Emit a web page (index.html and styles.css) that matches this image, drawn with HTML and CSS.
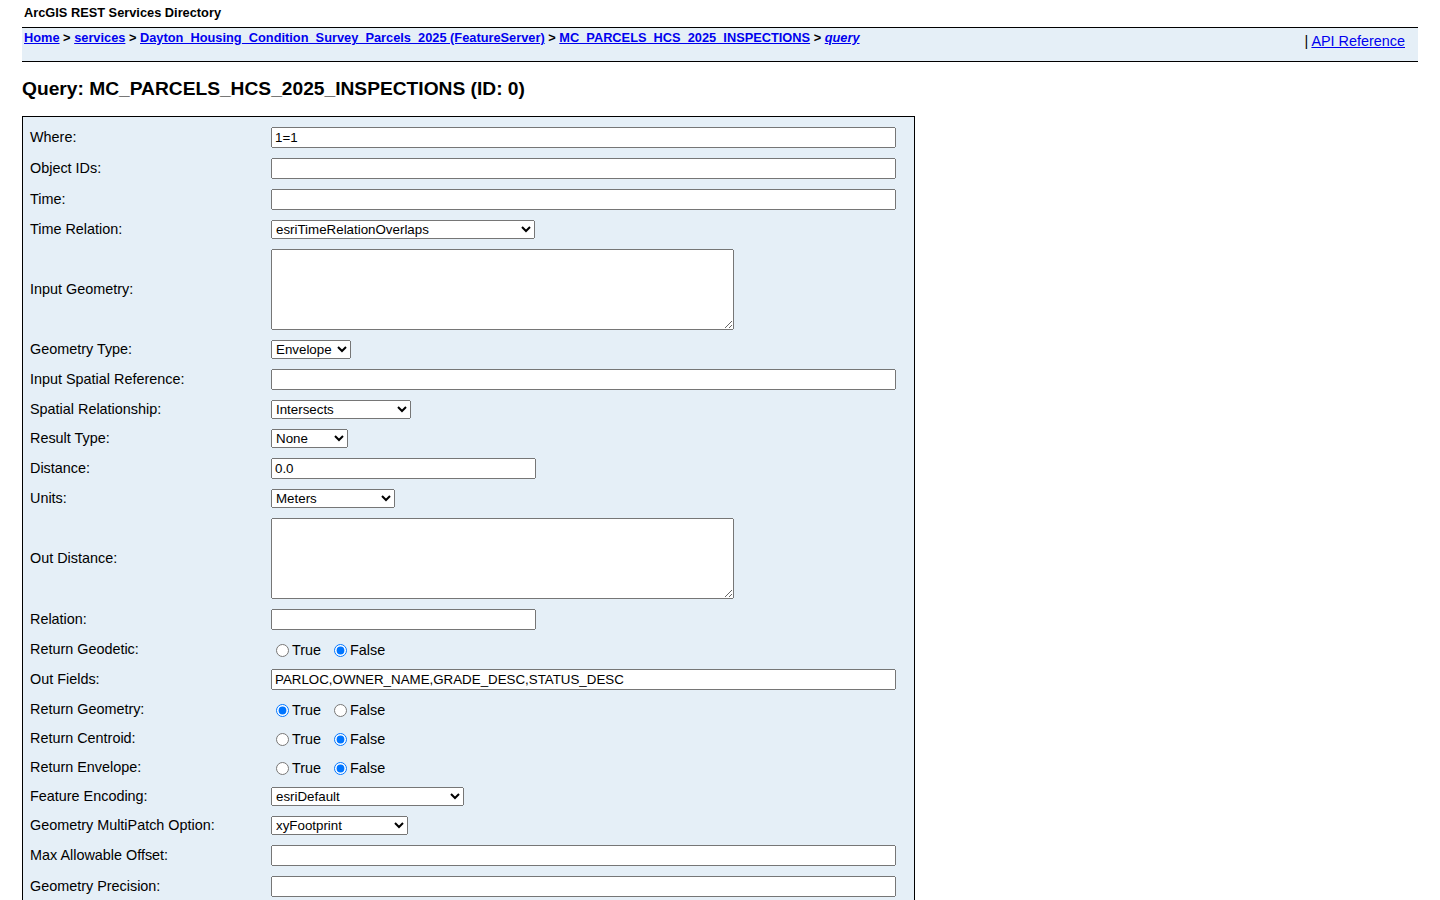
FILE: index.html
```html
<!DOCTYPE html>
<html lang="en">
<head>
<meta charset="utf-8">
<title>Query: MC_PARCELS_HCS_2025_INSPECTIONS (ID: 0)</title>
<link rel="stylesheet" href="styles.css">
</head>
<body>
<div class="title">ArcGIS REST Services Directory</div>
<div class="nav">
  <div class="crumbs">
    <a href="#">Home</a> &gt; <a href="#">services</a> &gt; <a href="#">Dayton_Housing_Condition_Survey_Parcels_2025 (FeatureServer)</a> &gt; <a href="#">MC_PARCELS_HCS_2025_INSPECTIONS</a> &gt; <a href="#" class="cur">query</a>
  </div>
  <div class="apiref">| <a href="#">API Reference</a></div>
</div>
<h2 class="heading">Query: MC_PARCELS_HCS_2025_INSPECTIONS (ID: 0)</h2>
<form class="qform">
  <label class="lbl">Where:</label>
  <div class="fld"><input type="text" class="w-full" value="1=1"></div>

  <label class="lbl">Object IDs:</label>
  <div class="fld"><input type="text" class="w-full"></div>

  <label class="lbl">Time:</label>
  <div class="fld"><input type="text" class="w-full"></div>

  <label class="lbl">Time Relation:</label>
  <div class="fld"><select class="s-timerel"><option>esriTimeRelationOverlaps</option><option>esriTimeRelationAfterStartOverlapsEnd</option><option>esriTimeRelationOverlapsStartWithinEnd</option></select></div>

  <label class="lbl">Input Geometry:</label>
  <div class="fld"><textarea class="ta"></textarea></div>

  <label class="lbl">Geometry Type:</label>
  <div class="fld"><select class="s-geomtype"><option>Envelope</option><option>Point</option><option>Multipoint</option><option>Polyline</option><option>Polygon</option></select></div>

  <label class="lbl">Input Spatial Reference:</label>
  <div class="fld"><input type="text" class="w-full"></div>

  <label class="lbl">Spatial Relationship:</label>
  <div class="fld"><select class="s-spatial"><option>Intersects</option><option>Contains</option><option>Crosses</option><option>Envelope Intersects</option><option>Index Intersects</option><option>Overlaps</option><option>Touches</option><option>Within</option><option>Relation</option></select></div>

  <label class="lbl">Result Type:</label>
  <div class="fld"><select class="s-result"><option>None</option><option>Standard</option><option>Tile</option></select></div>

  <label class="lbl">Distance:</label>
  <div class="fld"><input type="text" class="w-half" value="0.0"></div>

  <label class="lbl">Units:</label>
  <div class="fld"><select class="s-units"><option>Meters</option><option>Statute Miles</option><option>Feet</option><option>Kilometers</option><option>Nautical Miles</option><option>US Nautical Miles</option></select></div>

  <label class="lbl">Out Distance:</label>
  <div class="fld"><textarea class="ta"></textarea></div>

  <label class="lbl">Relation:</label>
  <div class="fld"><input type="text" class="w-half"></div>

  <label class="lbl">Return Geodetic:</label>
  <div class="fld radios"><label class="opt"><input type="radio" name="geod">True</label><label class="opt"><input type="radio" name="geod" checked>False</label></div>

  <label class="lbl">Out Fields:</label>
  <div class="fld"><input type="text" class="w-full" value="PARLOC,OWNER_NAME,GRADE_DESC,STATUS_DESC"></div>

  <label class="lbl">Return Geometry:</label>
  <div class="fld radios"><label class="opt"><input type="radio" name="rgeom" checked>True</label><label class="opt"><input type="radio" name="rgeom">False</label></div>

  <label class="lbl">Return Centroid:</label>
  <div class="fld radios"><label class="opt"><input type="radio" name="rcent">True</label><label class="opt"><input type="radio" name="rcent" checked>False</label></div>

  <label class="lbl">Return Envelope:</label>
  <div class="fld radios"><label class="opt"><input type="radio" name="renv">True</label><label class="opt"><input type="radio" name="renv" checked>False</label></div>

  <label class="lbl">Feature Encoding:</label>
  <div class="fld"><select class="s-enc"><option>esriDefault</option><option>esriCompressedShapeBuffer</option></select></div>

  <label class="lbl">Geometry MultiPatch Option:</label>
  <div class="fld"><select class="s-mp"><option>xyFootprint</option><option>stripMaterials</option><option>embedMaterials</option><option>externalizeTextures</option></select></div>

  <label class="lbl">Max Allowable Offset:</label>
  <div class="fld"><input type="text" class="w-full"></div>

  <label class="lbl">Geometry Precision:</label>
  <div class="fld"><input type="text" class="w-full"></div>
</form>
</body>
</html>
```

FILE: styles.css
```css
html, body {
  margin: 0;
  padding: 0;
}

body {
  padding: 0 22px 40px;
  font-family: "Liberation Sans", Arial, Helvetica, sans-serif;
  font-size: 14.4px;
  color: #000;
  background: #fff;
}

a {
  color: #0000ee;
  text-decoration: underline;
}

.title {
  font-size: 12.8px;
  font-weight: bold;
  padding: 6px 2px 6px;
  line-height: 14.7px;
}

.nav {
  display: flex;
  justify-content: space-between;
  align-items: flex-start;
  height: 33px;
  border-top: 1px solid #000;
  border-bottom: 1px solid #000;
  background: #e5eff7;
}

.crumbs {
  font-size: 12.8px;
  font-weight: bold;
  padding: 3px 2px 0;
  line-height: 14.7px;
}

.crumbs .cur {
  font-style: italic;
}

.apiref {
  font-size: 14.4px;
  padding: 5px 13px 0 0;
  line-height: 16.5px;
}

.heading {
  font-size: 19.2px;
  font-weight: bold;
  margin: 16px 0;
  line-height: 22px;
}

.qform {
  width: 893px;
  box-sizing: border-box;
  border: 1px solid #000;
  background: #e5eff7;
  padding: 10px 17px 10px 7px;
  display: grid;
  grid-template-columns: 241px 1fr;
  row-gap: 10px;
  align-items: center;
  margin: 0;
}

.lbl {
  font-size: 14.4px;
  line-height: 16.5px;
}

.fld {
  display: flex;
  align-items: center;
}

input[type="text"],
select,
textarea {
  font-family: "Liberation Sans", Arial, Helvetica, sans-serif;
  font-size: 13.333px;
  box-sizing: border-box;
  margin: 0;
}

input[type="text"] {
  height: 21px;
}

select {
  height: 19px;
}

.w-full { width: 625px; }
.w-half { width: 265px; }

.ta {
  width: 463px;
  height: 81px;
  display: block;
}

.s-timerel { width: 264px; }
.s-geomtype { width: 80px; }
.s-spatial { width: 140px; }
.s-result { width: 77px; }
.s-units { width: 124px; }
.s-enc { width: 193px; }
.s-mp { width: 137px; }

.radios {
  height: 19px;
}

.opt {
  display: inline-flex;
  align-items: center;
  margin-right: 8px;
  font-size: 14.4px;
  line-height: 16.5px;
  padding-top: 2px;
}

.opt input[type="radio"] {
  margin: 0 3px 0 5px;
  width: 13px;
  height: 13px;
}
```
